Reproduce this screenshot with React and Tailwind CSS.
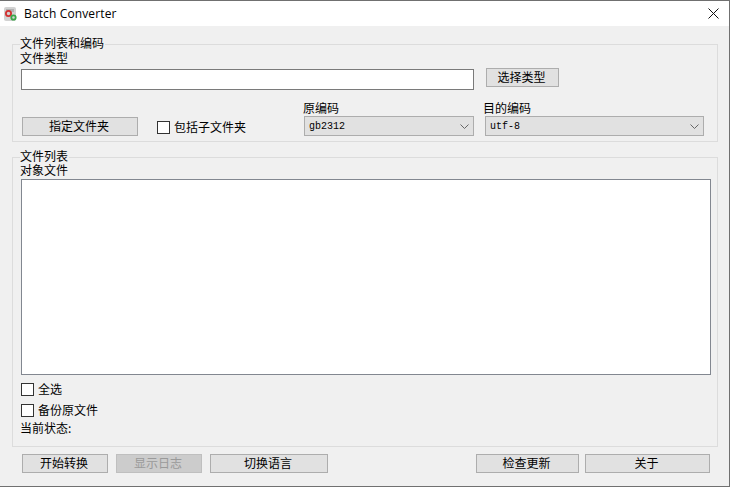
const CJK = "font-['Noto_Sans_CJK_SC','Liberation_Sans',sans-serif]"

function Btn({ width, disabled, children }) {
  return (
    <button
      disabled={disabled}
      className={`h-[19px] shrink-0 border flex items-center justify-center pr-[2px] pb-[2px] text-[12px] leading-none ${width} ${
        disabled ? 'bg-[#cccccc] border-[#bfbfbf] text-[#9a9a9a]' : 'bg-[#e1e1e1] border-[#adadad] text-black'
      }`}
    >
      {children}
    </button>
  )
}

function Check({ label }) {
  return (
    <label className="flex items-center h-[13px]">
      <span className="w-[13px] h-[13px] shrink-0 bg-white border border-[#333333]" />
      <span className="ml-[4px] mt-[-2px] text-[12px] leading-none text-black">{label}</span>
    </label>
  )
}

function Combo({ width, value }) {
  return (
    <div className={`h-[20px] border border-[#adadad] bg-[#e1e1e1] flex items-center justify-between pl-[4px] pr-[4px] ${width}`}>
      <span className="pt-px font-['Liberation_Mono',monospace] text-[10px] leading-none text-black">{value}</span>
      <svg width="9" height="5" viewBox="0 0 9 5" fill="none" stroke="#666666" strokeWidth="1">
        <path d="M0.5 0.5L4.5 4.5L8.5 0.5" />
      </svg>
    </div>
  )
}

function Group({ title, className, children }) {
  return (
    <fieldset className={`relative border border-[#dcdcdc] w-[706px] ${className}`}>
      <span className="absolute left-[7px] top-[-9px] bg-[#f0f0f0] pr-px text-[12px] leading-[14px] text-black">{title}</span>
      {children}
    </fieldset>
  )
}

function AppIcon() {
  return (
    <svg width="16" height="16" viewBox="0 0 16 16" className="shrink-0">
      <rect x="1" y="1" width="12" height="14" rx="2" fill="#d2d2d2" />
      <rect x="3" y="3" width="8" height="3" fill="#9c9c9c" opacity="0.6" />
      <circle cx="5.5" cy="7.5" r="2.6" fill="none" stroke="#d23030" strokeWidth="1.8" />
      <circle cx="10.5" cy="11.5" r="2.2" fill="none" stroke="#3aa648" strokeWidth="1.8" />
    </svg>
  )
}

export default function App() {
  return (
    <div className={`w-[730px] h-[487px] flex flex-col border-t border-r border-b border-[#707070] overflow-hidden ${CJK}`}>
      {/* title bar */}
      <div className="h-[25px] shrink-0 bg-white flex items-center pl-[3px] pr-[10px]">
        <AppIcon />
        <span className="ml-[5px] font-['Open_Sans',sans-serif] text-[12px] leading-none tracking-[0.13px] text-black">Batch Converter</span>
        <svg width="11" height="11" viewBox="0 0 11 11" className="ml-auto" stroke="#111111" strokeWidth="1" fill="none">
          <path d="M0.5 0.5L10.5 10.5M10.5 0.5L0.5 10.5" />
        </svg>
      </div>

      <div className="flex-1 bg-[#f0f0f0] pl-[12px] pt-[18px]">
        <Group title="文件列表和编码" className="h-[98px]">
          <div className="pl-[7px] pt-[6px] h-[23px] text-[12px] leading-[14px] text-black">文件类型</div>
          <div className="flex items-start pl-[8px]">
            <div className="mt-px w-[453px] h-[21px] bg-white border border-[#7a7a7a]" />
            <div className="ml-[12px]"><Btn width="w-[73px]">选择类型</Btn></div>
          </div>
          <div className="flex items-end pl-[9px] mt-[11px]">
            <Btn width="w-[116px]">指定文件夹</Btn>
            <div className="ml-[19px] mb-[2px] w-[147px]"><Check label="包括子文件夹" /></div>
            <div className="w-[170px]">
              <div className="ml-[-1px] text-[12px] leading-[14px] text-black mb-px">原编码</div>
              <Combo width="w-[170px]" value="gb2312" />
            </div>
            <div className="ml-[11px] w-[219px]">
              <div className="ml-[-2px] text-[12px] leading-[14px] text-black mb-px">目的编码</div>
              <Combo width="w-[219px]" value="utf-8" />
            </div>
          </div>
        </Group>

        <Group title="文件列表" className="h-[290px] mt-[15px]">
          <div className="pl-[7px] pt-[5px] h-[21px] text-[12px] leading-[14px] text-black">对象文件</div>
          <div className="ml-[8px] w-[690px] h-[196px] bg-white border border-[#828790]" />
          <div className="pl-[8px] mt-[8px] flex flex-col gap-[8px]">
            <Check label="全选" />
            <Check label="备份原文件" />
          </div>
          <div className="pl-[7px] mt-[4px] text-[12px] leading-[14px] text-black">当前状态:</div>
        </Group>

        <div className="flex items-start pl-[10px] mt-[7px]">
          <Btn width="w-[86px]">开始转换</Btn>
          <div className="ml-[8px]"><Btn width="w-[86px]" disabled>显示日志</Btn></div>
          <div className="ml-[8px]"><Btn width="w-[118px]">切换语言</Btn></div>
          <div className="ml-[148px]"><Btn width="w-[103px]">检查更新</Btn></div>
          <div className="ml-[6px]"><Btn width="w-[125px]">关于</Btn></div>
        </div>
      </div>
    </div>
  )
}
